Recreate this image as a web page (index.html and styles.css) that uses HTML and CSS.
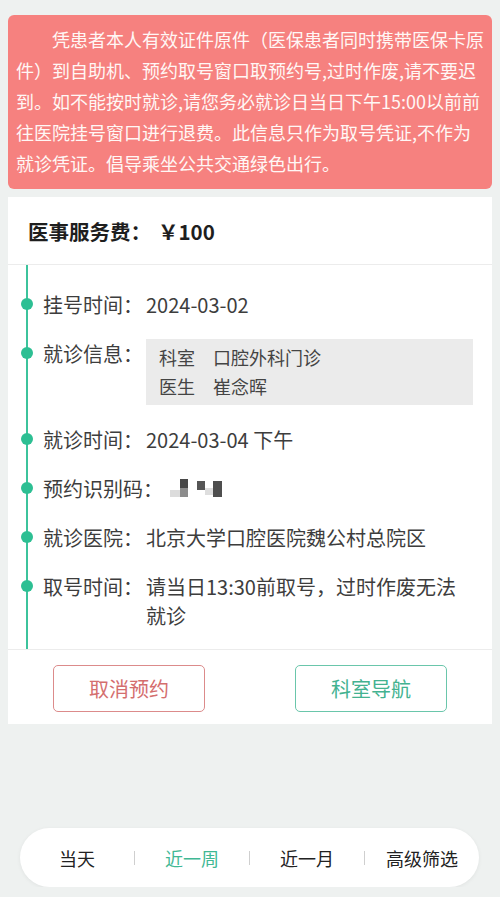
FILE: index.html
```html
<!DOCTYPE html>
<html lang="zh-CN">
<head>
  <meta charset="UTF-8">
  <title>预约详情</title>
  <link rel="stylesheet" href="styles.css">
</head>
<body>

  <!-- 提示 -->
  <div class="notice">
    <p>凭患者本人有效证件原件（医保患者同时携带医保卡原件）到自助机、预约取号窗口取预约号,过时作废,请不要迟到。如不能按时就诊,请您务必就诊日当日下午15:00以前前往医院挂号窗口进行退费。此信息只作为取号凭证,不作为就诊凭证。倡导乘坐公共交通绿色出行。</p>
  </div>

  <div class="card">
    <div class="fee">医事服务费：<span class="price">￥100</span></div>

    <div class="timeline">
      <div class="row">
        <span class="label">挂号时间：</span>
        <span class="val">2024-03-02</span>
      </div>
      <div class="row">
        <span class="label">就诊信息：</span>
        <div class="info-box">
          <div><span class="key">科室</span>口腔外科门诊</div>
          <div><span class="key">医生</span>崔念晖</div>
        </div>
      </div>
      <div class="row">
        <span class="label">就诊时间：</span>
        <span class="val">2024-03-04 下午</span>
      </div>
      <div class="row">
        <span class="label">预约识别码：</span>
        <span class="code">
          <i class="px a"></i><i class="px b"></i><i class="px c"></i><i class="px d"></i><i class="px e"></i>
        </span>
      </div>
      <div class="row">
        <span class="label">就诊医院：</span>
        <span class="val">北京大学口腔医院魏公村总院区</span>
      </div>
      <div class="row">
        <span class="label">取号时间：</span>
        <span class="val">请当日13:30前取号，过时作废无法就诊</span>
      </div>
    </div>

    <div class="actions">
      <div class="half"><button class="btn btn-cancel">取消预约</button></div>
      <div class="half"><button class="btn btn-nav">科室导航</button></div>
    </div>
  </div>

  <div class="filter">
    <a href="#" class="item">当天</a>
    <span class="sep"></span>
    <a href="#" class="item activo">近一周</a>
    <span class="sep"></span>
    <a href="#" class="item">近一月</a>
    <span class="sep"></span>
    <a href="#" class="item">高级筛选</a>
  </div>

</body>
</html>
```

FILE: styles.css
```css
body {
  margin: 0;
  padding-top: 15px;
  background-color: #eef1f0;
  font-family: "Noto Sans CJK SC", "Noto Sans", sans-serif;
  color: #333;
}

.notice {
  margin: 0 8px;
  background-color: #f6817f;
  border-radius: 6px;
  padding: 9px 8px 10px;
}

.notice p {
  margin: 0;
  font-size: 18px;
  line-height: 31px;
  color: #fff7f5;
  text-indent: 36px;
  word-break: break-all;
}

.card {
  margin: 8px 8px 0;
  background-color: #fff;
}

.fee {
  height: 67px;
  display: flex;
  align-items: center;
  padding-left: 20px;
  font-size: 20.5px;
  font-weight: bold;
  color: #1e1e1e;
  border-bottom: 1px solid #ececec;
}

.price {
  margin-left: 7px;
}

.timeline {
  position: relative;
  padding: 25px 19px 19px 35px;
  border-bottom: 1px solid #ececec;
}

.timeline::before {
  content: "";
  position: absolute;
  left: 18px;
  top: 0;
  bottom: 0;
  width: 2px;
  background-color: #3cc39c;
}

.row {
  position: relative;
  display: flex;
  align-items: flex-start;
  font-size: 20px;
  line-height: 29px;
  color: #3d3d3d;
}

.row + .row {
  margin-top: 20px;
}

.row::before {
  content: "";
  position: absolute;
  left: -22px;
  top: 8px;
  width: 12px;
  height: 12px;
  border-radius: 50%;
  background-color: #2dbf93;
}

.label {
  flex-shrink: 0;
  min-width: 103px;
}

.val {
  flex: 1;
}

.info-box {
  flex: 1;
  background-color: #ebebeb;
  padding: 4px 13px 4px;
  font-size: 18px;
  color: #444;
}

.key {
  display: inline-block;
  width: 54px;
}

.code {
  display: flex;
  align-items: flex-start;
  margin-left: 7px;
  padding-top: 5px;
  height: 29px;
  box-sizing: border-box;
}

.px {
  display: inline-block;
  width: 8px;
}

.px.a { width: 10px; height: 18px; background: linear-gradient(#fff 60%, #dcdcdc 60%); }
.px.b { height: 18px; background: linear-gradient(#484848 50%, #8c8c8c 50%); }
.px.c { height: 9px; margin-left: 9px; margin-top: 2px; background: #555; }
.px.d { height: 16px; background: linear-gradient(#fff 55%, #dedede 55%); }
.px.e { width: 9px; height: 16px; margin-top: 2px; background: #4e4e4e; }

.actions {
  display: flex;
  padding: 15px 0 12px;
}

.half {
  flex: 1;
  display: flex;
  justify-content: center;
}

.btn {
  width: 152px;
  height: 47px;
  background: #fff;
  border-radius: 5px;
  font-family: inherit;
  font-size: 20px;
  cursor: pointer;
}

.btn-cancel {
  border: 1.5px solid #dc8b8b;
  color: #d46e6e;
}

.btn-nav {
  border: 1.5px solid #6ac6ab;
  color: #43b290;
}

.filter {
  display: flex;
  align-items: center;
  margin: 104px 21px 0 20px;
  height: 59px;
  background-color: #fff;
  border-radius: 30px;
  box-shadow: 0 1px 4px rgba(0,0,0,0.06);
}

.item {
  flex: 1;
  text-align: center;
  text-decoration: none;
  font-size: 18px;
  color: #222;
}

.item.activo {
  color: #3fb894;
}

.sep {
  width: 1px;
  height: 14px;
  background-color: #cfcfcf;
}
```
